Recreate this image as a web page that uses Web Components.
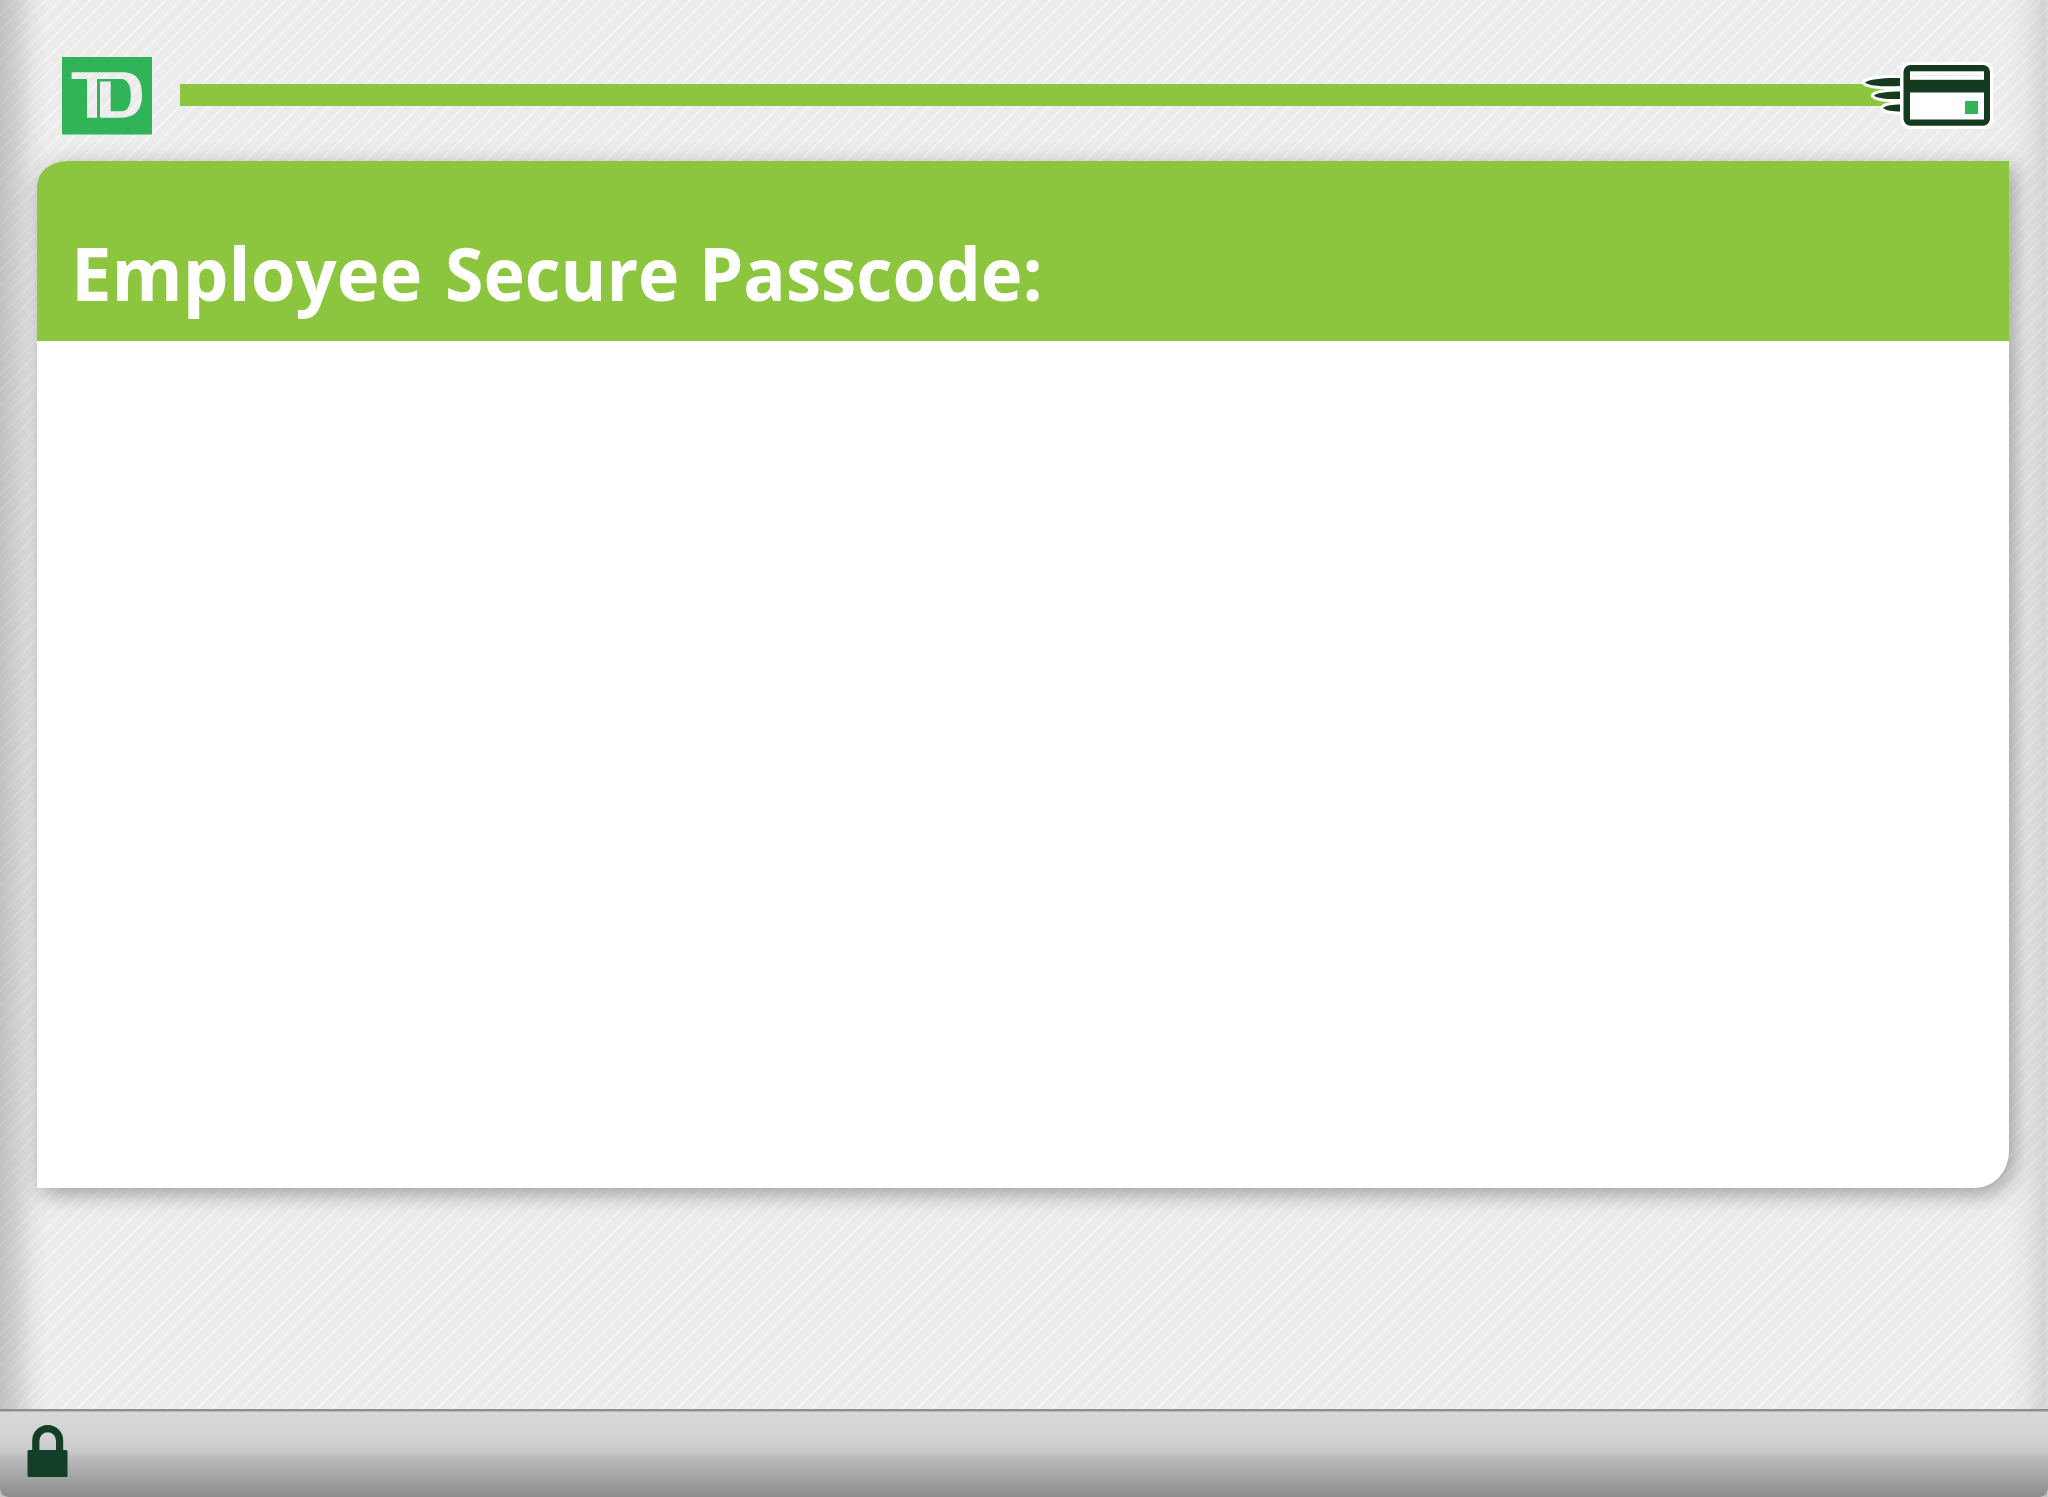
<!DOCTYPE html>
<html lang="en"><head><meta charset="utf-8"><title>Employee Secure Passcode</title>
<style>html,body{margin:0;height:100%;overflow:hidden;background:#c4c4c4}</style></head><body>
<td-screen><td-header></td-header><td-panel><td-word style="--w:354.8px;--s:.979">Employee</td-word> <td-word style="--w:234.8px;--s:.943">Secure</td-word> <td-word style="--w:340px;--s:.954">Passcode:</td-word></td-panel><td-footer></td-footer></td-screen>
<script>
const define=(name,html)=>customElements.define(name,class extends HTMLElement{
 constructor(){super();this.attachShadow({mode:'open'}).innerHTML=html}});
define('td-screen',`<style>
:host{display:flex;flex-direction:column;box-sizing:border-box;height:1497px;width:2048px;overflow:hidden;border-radius:0 0 8px 8px;
background:linear-gradient(90deg,rgba(0,0,0,.19),rgba(0,0,0,.13) 15px,rgba(0,0,0,.04) 32px,transparent 48px,transparent 2004px,rgba(0,0,0,.03) 2026px,rgba(0,0,0,.11) 2045px,rgba(0,0,0,.07) 2048px),
repeating-linear-gradient(135deg,#f5f5f5 0,#f5f5f5 .8px,#ececec 1.6px,#ececec 9.8px,#f5f5f5 10.6066px)}
</style><slot></slot>`);
define('td-header',`<style>
:host{display:flex;height:161px;padding-left:62px;box-sizing:border-box;align-items:flex-start}
.logo{margin-top:57px;display:block}
.bar{margin:84px 0 0 28px;width:1720px;height:22px;background:#8cc63f;flex:none}
.card{margin:60px 0 0 -40px;display:block;flex:none}
</style>
<svg class="logo" width="90" height="78" viewBox="0 0 90 78"><path fill="#30b457" fill-rule="evenodd" d="M0 0H90V77.600H0ZM9.600 15.300V22H25V60.700H35V22H59C66 22 68.800 29 68.800 38C68.800 48 66 54.300 59 54.300H48.700V24.400H38V60.700H59C74 60.700 80 52 80 38C80 24 75 15.300 61 15.300Z"/></svg>
<div class="bar"></div>
<svg class="card" width="136" height="72" viewBox="1860 60 136 72">
<g fill="#163a20" stroke="#fff" stroke-width="6" stroke-linejoin="round" paint-order="stroke"><path d="M1900 78C1885 77.500 1869 79 1865 82.500C1869 86 1885 87 1900 86Z"/><path d="M1900 91.500C1889 91.500 1877 92.500 1874 95.500C1877 98.500 1889 99.500 1900 99Z"/><path d="M1900 104.500C1893 104.500 1885 105.500 1883 108C1885 110.500 1893 111.500 1900 111.500Z"/></g>
<rect x="1900.300" y="62" width="93" height="67" rx="9" fill="#fff"/><rect x="1903.500" y="65" width="86.500" height="60.700" rx="7" fill="#163a20"/><rect x="1910" y="71.300" width="74" height="8.500" fill="#fff"/><path d="M1913 75.500H1981" stroke="#e9e9e9" stroke-dasharray="13 1"/><rect x="1910" y="92.500" width="74" height="27" fill="#fff"/><rect x="1965" y="101" width="13" height="13" fill="#30b457"/></svg>`);
define('td-word',`<style>
:host{display:inline-block;width:var(--w);transform:scaleX(var(--s));transform-origin:0 50%}
</style><slot></slot>`);
define('td-panel',`<style>
:host{display:block;margin-left:37px;width:1972px;height:1027px;background:#fff;border-radius:30px 0 34px 0/25px 0 37px 0;box-shadow:5px 6px 22px rgba(0,0,0,.34);flex:none}
header{height:180px;background:#8cc63f;border-radius:30px 0 0 0/25px 0 0 0;box-sizing:border-box;padding:62px 0 0 34px}
h1{margin:0;font:700 74px/100px "Open Sans",sans-serif;color:#fff;white-space:nowrap}
</style><header><h1><slot></slot></h1></header>`);
define('td-footer',`<style>
:host{display:block;margin-top:auto;height:88px;box-sizing:border-box;border-top:2px solid #8a8f8b;background:linear-gradient(#d8d8d8 0,#d4d4d4 23px,#c8c8c8 42px,#bdbdbd 45px,#8a8a8a 88px);box-shadow:inset 0 1px #b5b8b6;border-radius:0 0 8px 8px;padding:14px 0 0 27px;flex:none}
svg{display:block}</style>
<svg width="42" height="53" viewBox="0 0 42 53"><path d="M8.800 27V15.500a11.900 11.900 0 0 1 23.800 0V27" fill="none" stroke="#123f26" stroke-width="7.200"/><rect x=".5" y="25" width="40" height="27" rx="1.500" fill="#123f26"/></svg>`);
</script></body></html>
